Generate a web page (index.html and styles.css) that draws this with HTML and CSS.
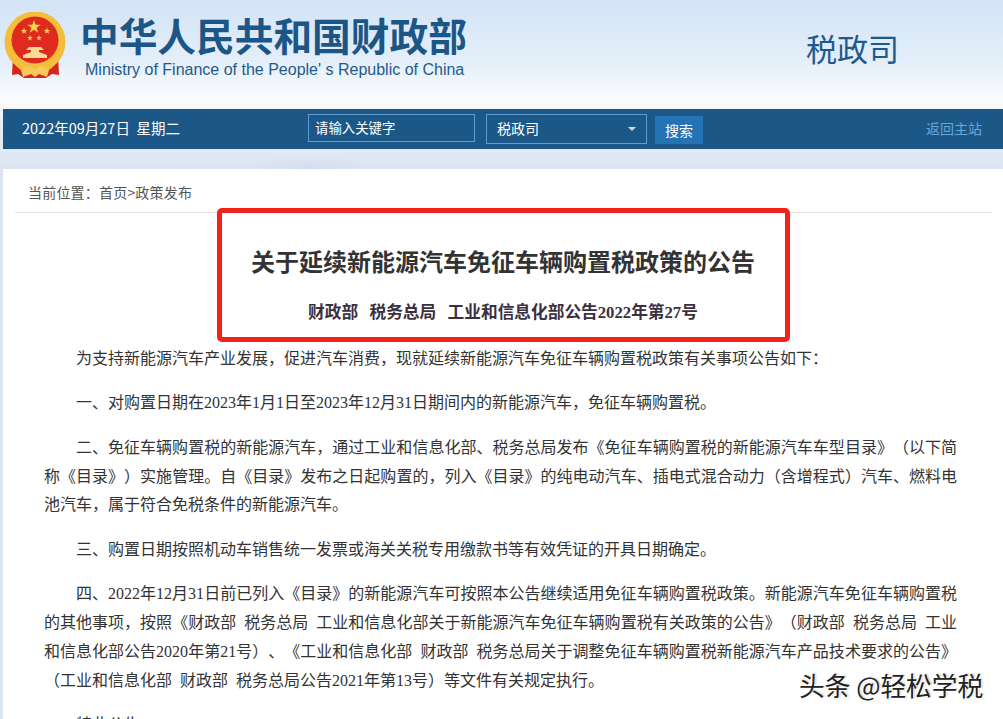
FILE: index.html
```html
<!DOCTYPE html>
<html lang="zh-CN">
<head>
    <title>关于延续新能源汽车免征车辆购置税政策的公告</title>
    <link rel="stylesheet" href="styles.css">
</head>
<body>
    <div class="header">
        <svg class="emblem" width="64" height="70" viewBox="0 0 64 70">
            <defs>
                <path id="star" d="M0 -1 L.24 -.31 .95 -.31 .38 .12 .59 .81 0 .4 -.59 .81 -.38 .12 -.95 -.31 -.24 -.31 Z" fill="#f8d24f"/>
            </defs>
            <path d="M10 44 L9 63 L15 62 L21 66 L43 66 L49 62 L56 63 L55 44 Z" fill="#d8261c"/>
            <circle cx="32" cy="30" r="30.500" fill="#f4bd3a"/>
            <circle cx="32" cy="28" r="23.500" fill="#df2a1f"/>
            <use href="#star" transform="translate(31 15) scale(7)"/>
            <use href="#star" transform="translate(21 19) scale(3.500)"/>
            <use href="#star" transform="translate(44 19) scale(3.500)"/>
            <use href="#star" transform="translate(27 26) scale(3)"/>
            <use href="#star" transform="translate(36 26) scale(3)"/>
            <path d="M26 35 L38 35 L41 38 L36 38 L36 40 L44 43 L44 46 L20 46 L20 43 L28 40 L28 38 L23 38 Z" fill="#f7dc94"/>
            <path d="M10 38 Q16 54 32 54 Q48 54 54 38 L58 42 Q50 62 32 62 Q14 62 6 42 Z" fill="#f4bd3a"/>
            <path d="M18 58 Q25 51 32 57 Q39 51 46 58 L44 65 L36 62 L32 65 L28 62 L20 65 Z" fill="#f6c95a"/>
        </svg>
        <div class="logo-text">
            <div class="logo-cn">中华人民共和国财政部</div>
            <div class="logo-en">Ministry of Finance of the People' s Republic of China</div>
        </div>
        <div class="dept">税政司</div>
    </div>

    <div class="nav">
        <div class="date">2022年09月27日&nbsp; 星期二</div>
        <input class="search-input" type="text" placeholder="请输入关键字">
        <div class="search-select">税政司<span class="arrow"></span></div>
        <button class="search-btn">搜索</button>
        <a class="back-link" href="#">返回主站</a>
    </div>

    <div class="main">
        <div class="crumb">当前位置：首页&gt;政策发布</div>
        <div class="title-block">
            <h1>关于延续新能源汽车免征车辆购置税政策的公告</h1>
            <h2>财政部&nbsp; 税务总局&nbsp; 工业和信息化部公告2022年第27号</h2>
            <div class="red-frame"></div>
        </div>
        <div class="article">
            <p>为支持新能源汽车产业发展，促进汽车消费，现就延续新能源汽车免征车辆购置税政策有关事项公告如下：</p>
            <p>一、对购置日期在2023年1月1日至2023年12月31日期间内的新能源汽车，免征车辆购置税。</p>
            <p>二、免征车辆购置税的新能源汽车，通过工业和信息化部、税务总局发布《免征车辆购置税的新能源汽车车型目录》（以下简称《目录》）实施管理。自《目录》发布之日起购置的，列入《目录》的纯电动汽车、插电式混合动力（含增程式）汽车、燃料电池汽车，属于符合免税条件的新能源汽车。</p>
            <p>三、购置日期按照机动车销售统一发票或海关关税专用缴款书等有效凭证的开具日期确定。</p>
            <p>四、2022年12月31日前已列入《目录》的新能源汽车可按照本公告继续适用免征车辆购置税政策。新能源汽车免征车辆购置税的其他事项，按照《财政部 税务总局 工业和信息化部关于新能源汽车免征车辆购置税有关政策的公告》（财政部 税务总局 工业和信息化部公告2020年第21号）、《工业和信息化部 财政部 税务总局关于调整免征车辆购置税新能源汽车产品技术要求的公告》（工业和信息化部 财政部 税务总局公告2021年第13号）等文件有关规定执行。</p>
            <p>特此公告。</p>
        </div>
    </div>

    <div class="watermark">头条 @轻松学税</div>
</body>
</html>
```

FILE: styles.css
```css
html, body {
    margin: 0;
    padding: 0;
    height: 719px;
    overflow: hidden;
}
body {
    font-family: "Noto Sans CJK SC", "Liberation Sans", sans-serif;
    background:
        radial-gradient(ellipse 60px 14px at 310px 170px, #d0dcee 0, rgba(208, 220, 238, 0) 100%),
        linear-gradient(to bottom, #d3e4f6 0, #e3eef9 60px, #fbfcfe 100px, #e9eff7 120px, #dbe5f2 169px);
    position: relative;
    padding-left: 3px;
    text-spacing-trim: space-all;
}
.header {
    height: 109px;
    display: flex;
    align-items: flex-start;
}
.emblem {
    margin-top: 12px;
    flex-shrink: 0;
}
.logo-text {
    margin-left: 13px;
    padding-top: 12px;
    width: 726px;
}
.logo-cn {
    font-size: 38.700px;
    line-height: 45px;
    font-weight: 700;
    color: #1b5687;
    white-space: nowrap;
}
.logo-en {
    font-family: "Liberation Sans", sans-serif;
    font-size: 16px;
    line-height: 18px;
    margin-top: 4px;
    margin-left: 5px;
    color: #1f5a8a;
    white-space: nowrap;
}
.dept {
    font-size: 31px;
    line-height: 40px;
    color: #1f5a8f;
    padding-top: 28px;
}
.nav {
    height: 40px;
    background: #1b5787;
    display: flex;
    align-items: flex-start;
    color: #fff;
    font-size: 14.500px;
}
.date {
    padding-left: 19px;
    width: 286px;
    line-height: 38px;
    white-space: nowrap;
}
.search-input {
    width: 167px;
    height: 28px;
    margin-top: 5px;
    padding: 0 6px 2px;
    box-sizing: border-box;
    background: transparent;
    border: 1px solid #5f9cd0;
    color: #fff;
    font-family: inherit;
    font-size: 13.400px;
}
.search-input::placeholder {
    color: #fff;
    opacity: 1;
}
.search-select {
    width: 161px;
    height: 30px;
    margin-top: 5px;
    margin-left: 11px;
    padding-left: 10px;
    box-sizing: border-box;
    border: 1px solid #5f9cd0;
    font-size: 14px;
    line-height: 26px;
    position: relative;
}
.arrow {
    position: absolute;
    right: 10px;
    top: 12px;
    border-left: 4px solid transparent;
    border-right: 4px solid transparent;
    border-top: 4px solid #c8dcec;
}
.search-btn {
    width: 48px;
    height: 28px;
    margin-top: 7px;
    margin-left: 8px;
    padding: 0;
    border: none;
    background: #2474b5;
    color: #fff;
    font-family: inherit;
    font-size: 14px;
}
.back-link {
    margin-left: 223px;
    line-height: 39px;
    font-size: 14px;
    color: #6aa6d9;
    text-decoration: none;
}
.main {
    margin-top: 20px;
    background: #fff;
    height: 560px;
}
.crumb {
    margin: 0 11px 0 12px;
    padding-left: 13px;
    height: 43px;
    line-height: 46px;
    font-size: 14px;
    letter-spacing: .2px;
    color: #555;
    border-bottom: 1px solid #e2e2e2;
}
.title-block {
    text-align: center;
    position: relative;
    height: 132px;
}
.title-block h1 {
    margin: 0;
    padding-top: 30px;
    font-size: 24px;
    line-height: 36px;
    font-weight: 700;
    color: #333;
}
.title-block h2 {
    margin: 19px 0 0;
    font-family: "Liberation Serif", "Noto Sans CJK SC", serif;
    font-size: 16.700px;
    line-height: 29px;
    font-weight: 700;
    word-spacing: 1.500px;
    color: #3a3040;
}
.red-frame {
    position: absolute;
    left: 214px;
    top: -5px;
    width: 573px;
    height: 134px;
    box-sizing: border-box;
    border: 5px solid #f0221a;
    border-radius: 5px;
}
.article {
    margin: 0 46px 0 41px;
    font-family: "Liberation Serif", "Noto Sans CJK SC", serif;
    font-size: 16px;
    line-height: 28.800px;
    word-spacing: 4px;
    color: #333;
}
.article p {
    margin: 0 0 15.600px;
    text-indent: 2em;
    text-align: justify;
}
.watermark {
    position: absolute;
    left: 799px;
    top: 668px;
    font-size: 25.700px;
    line-height: 34px;
    color: #222;
    text-shadow: 1px 1px 0 #fff, -1px -1px 0 #fff, 1px 0 2px #999;
    white-space: nowrap;
}
```
